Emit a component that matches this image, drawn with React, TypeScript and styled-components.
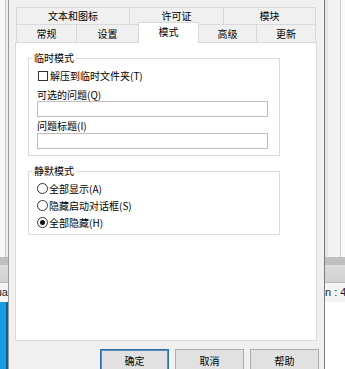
import React from "react";
import styled, { createGlobalStyle } from "styled-components";

const Global = createGlobalStyle`
  html, body { margin: 0; padding: 0; background: #f0f0f0; overflow: hidden; }
  * { box-sizing: border-box; }
`;

const FONT = `"Noto Sans CJK SC", "Microsoft YaHei", "Noto Sans", sans-serif`;

const Screen = styled.div`
  width: 345px;
  height: 369px;
  display: flex;
  overflow: hidden;
  font-family: ${FONT};
  font-size: 10px;
  color: #000;
`;

const Strip = styled.div<{ $w: number }>`
  width: ${(p) => p.$w}px;
  flex: none;
  display: flex;
  flex-direction: column;
  overflow: hidden;
`;

const StripTop = styled.div<{ $bg: string }>`
  height: 257px;
  flex: none;
  background: ${(p) => p.$bg};
`;

const StripBand = styled.div`
  height: 8px;
  flex: none;
  background: #bfbfbf;
`;

const StripBand2 = styled.div`
  height: 18px;
  flex: none;
  background: linear-gradient(#dcdcdc, #d0d0d0);
  border-bottom: 1px solid #b8b8b8;
`;

const StripText = styled.div<{ $align: string }>`
  height: 19px;
  flex: none;
  background: #f4f4f4;
  font-family: "Liberation Sans", Arial, sans-serif;
  font-size: 11px;
  line-height: 19px;
  white-space: nowrap;
  color: #222;
  text-align: ${(p) => p.$align};
  direction: ${(p) => (p.$align === "right" ? "rtl" : "ltr")};
`;

const StripBottom = styled.div<{ $bg: string }>`
  flex: 1;
  background: ${(p) => p.$bg};
`;

const Dialog = styled.div`
  width: 317px;
  flex: none;
  background: #f0f0f0;
  border-left: 1px solid #9a9a9a;
  border-right: 1px solid #7a7a7a;
  display: flex;
  flex-direction: column;
  padding-top: 7px;
`;

const TabRow = styled.div`
  display: flex;
  margin-left: 7px;
  height: ${(p: { $h: number }) => p.$h}px;
  flex: none;
`;

const Tab = styled.div<{ $w: number; $active?: boolean }>`
  width: ${(p) => p.$w}px;
  flex: none;
  margin-left: -1px;
  &:first-child { margin-left: 0; }
  border: 1px solid #d9d9d9;
  border-bottom: none;
  background: ${(p) => (p.$active ? "#ffffff" : "#f0f0f0")};
  display: flex;
  align-items: center;
  justify-content: center;
  font-size: 10px;
  line-height: 14px;
  position: relative;
  z-index: ${(p) => (p.$active ? 2 : 1)};
  margin-top: ${(p) => (p.$active ? -2 : 0)}px;
  height: ${(p) => (p.$active ? "calc(100% + 3px)" : "100%")};
  padding-bottom: ${(p) => (p.$active ? 3 : 0)}px;
`;

const Panel = styled.div`
  margin-left: 6px;
  width: 302px;
  height: 299px;
  flex: none;
  background: #ffffff;
  border: 1px solid #d9d9d9;
  display: flex;
  flex-direction: column;
  position: relative;
  z-index: 1;
`;

const Group = styled.fieldset<{ $top: number }>`
  margin: ${(p) => p.$top}px 0 0 12px;
  width: 252px;
  border: 1px solid #dcdcdc;
  padding: 0;
  min-width: 0;
`;

const Legend = styled.legend`
  margin-left: 3px;
  padding: 0 2px;
  font-size: 10px;
  line-height: 14px;
`;

const GroupBody = styled.div<{ $pt: number; $pb: number }>`
  padding: ${(p) => p.$pt}px 0 ${(p) => p.$pb}px 8px;
  display: flex;
  flex-direction: column;
`;

const CheckRow = styled.label`
  display: flex;
  align-items: center;
  gap: 2px;
  height: 14px;
  line-height: 14px;
`;

const CheckBox = styled.span`
  width: 10px;
  height: 10px;
  margin-left: 1px;
  border: 1px solid #333;
  background: #fff;
  flex: none;
`;

const FieldLabel = styled.div<{ $mt: number }>`
  margin-top: ${(p) => p.$mt}px;
  height: 12px;
  line-height: 12px;
  white-space: nowrap;
`;

const TextBox = styled.div<{ $mt: number }>`
  margin-top: ${(p) => p.$mt}px;
  width: 231px;
  height: 16px;
  border: 1px solid #bdbdbd;
  background: #fff;
`;

const RadioRow = styled.label`
  display: flex;
  align-items: center;
  gap: 1px;
  height: 17px;
  line-height: 14px;
`;

const Radio = styled.span`
  width: 11px;
  height: 11px;
  border-radius: 50%;
  border: 1px solid #333;
  background: #fff;
  display: flex;
  align-items: center;
  justify-content: center;
  flex: none;
`;

const Dot = styled.span`
  width: 5px;
  height: 5px;
  border-radius: 50%;
  background: #111;
`;

const ButtonBar = styled.div`
  display: flex;
  justify-content: flex-end;
  gap: 6px;
  padding-right: 5px;
  margin-top: 8px;
`;

const Button = styled.div<{ $default?: boolean }>`
  width: 69px;
  height: 23px;
  flex: none;
  background: #e1e1e1;
  border: 1px solid ${(p) => (p.$default ? "#2f6ea5" : "#adadad")};
  box-shadow: ${(p) => (p.$default ? "inset 0 0 0 1px #5b8fc0" : "none")};
  display: flex;
  align-items: center;
  justify-content: center;
  font-size: 10px;
`;

const row1 = [
  { t: "文本和图标", w: 114 },
  { t: "许可证", w: 95 },
  { t: "模块", w: 93 },
];
const row2 = [
  { t: "常规", w: 61 },
  { t: "设置", w: 63 },
  { t: "模式", w: 61, active: true },
  { t: "高级", w: 59 },
  { t: "更新", w: 60 },
];

const radios = [
  { t: "全部显示(A)", c: false },
  { t: "隐藏启动对话框(S)", c: false },
  { t: "全部隐藏(H)", c: true },
];

export default function App() {
  return (
    <>
      <Global />
      <Screen>
        <Strip $w={8}>
          <StripTop $bg="linear-gradient(to right, #f7f7f7 0 5px, #c4c4c4 5px 6px, #ececec 6px)" />
          <StripBand />
          <StripBand2 />
          <StripText $align="right">ua</StripText>
          <StripBottom $bg="linear-gradient(to right, #1a9de2 0 6px, #0f5f8f 6px)" />
        </Strip>
        <Dialog>
          <TabRow $h={17}>
            {row1.map((t) => (
              <Tab key={t.t} $w={t.w}>{t.t}</Tab>
            ))}
          </TabRow>
          <TabRow $h={18}>
            {row2.map((t) => (
              <Tab key={t.t} $w={t.w} $active={t.active}>{t.t}</Tab>
            ))}
          </TabRow>
          <Panel>
            <Group $top={8}>
              <Legend>临时模式</Legend>
              <GroupBody $pt={4} $pb={6}>
                <CheckRow>
                  <CheckBox />
                  解压到临时文件夹(T)
                </CheckRow>
                <FieldLabel $mt={6}>可选的问题(Q)</FieldLabel>
                <TextBox $mt={0} />
                <FieldLabel $mt={3}>问题标题(I)</FieldLabel>
                <TextBox $mt={1} />
              </GroupBody>
            </Group>
            <Group $top={8}>
              <Legend>静默模式</Legend>
              <GroupBody $pt={2} $pb={3}>
                {radios.map((r) => (
                  <RadioRow key={r.t}>
                    <Radio>{r.c && <Dot />}</Radio>
                    {r.t}
                  </RadioRow>
                ))}
              </GroupBody>
            </Group>
          </Panel>
          <ButtonBar>
            <Button $default>确定</Button>
            <Button>取消</Button>
            <Button>帮助</Button>
          </ButtonBar>
        </Dialog>
        <Strip $w={20}>
          <StripTop $bg="linear-gradient(to right, #e4e4e4 0 3px, #f2f2f2 3px 15px, #c8c8c8 15px 16px, #fafafa 16px)" />
          <StripBand />
          <StripBand2 />
          <StripText $align="left">n : 4</StripText>
          <StripBottom $bg="#ffffff" />
        </Strip>
      </Screen>
    </>
  );
}
